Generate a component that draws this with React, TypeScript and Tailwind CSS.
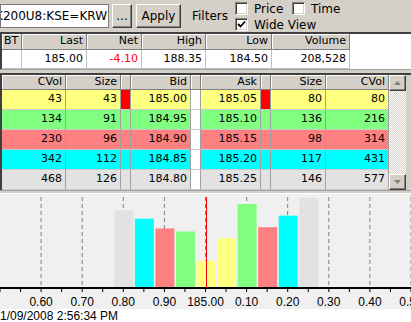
const UI = "font-['DejaVu_Sans','Liberation_Sans',sans-serif]";

const summary = [
  { label: "BT", w: "w-[20px]", value: "" },
  { label: "Last", w: "w-[65px]", value: "185.00" },
  { label: "Net", w: "w-[55px]", value: "-4.10", red: true },
  { label: "High", w: "w-[64px]", value: "188.35" },
  { label: "Low", w: "w-[66px]", value: "184.50" },
  { label: "Volume", w: "w-[78px]", value: "208,528" },
];

const book = [
  { bg: "bg-[#ffff80]", fill: "#ffff80", bidCVol: 43, bidSize: 43, bid: "185.00", ask: "185.05", askSize: 80, askCVol: 80, best: true },
  { bg: "bg-[#80ff80]", fill: "#80ff80", bidCVol: 134, bidSize: 91, bid: "184.95", ask: "185.10", askSize: 136, askCVol: 216 },
  { bg: "bg-[#ff8080]", fill: "#ff8080", bidCVol: 230, bidSize: 96, bid: "184.90", ask: "185.15", askSize: 98, askCVol: 314 },
  { bg: "bg-[#00ffff]", fill: "#00ffff", bidCVol: 342, bidSize: 112, bid: "184.85", ask: "185.20", askSize: 117, askCVol: 431 },
  { bg: "bg-[#e2e2e2]", fill: "#e2e2e2", bidCVol: 468, bidSize: 126, bid: "184.80", ask: "185.25", askSize: 146, askCVol: 577 },
];

const head = "h-full border-r border-b border-r-[#808080] border-b-[#808080] bg-[#d4d0c8] shadow-[inset_1px_1px_0_#fff] flex items-center justify-end pr-[3px]";

function Checkbox({ checked }: { checked?: boolean }) {
  return (
    <span className="w-[13px] h-[13px] bg-white border border-t-[#808080] border-l-[#808080] border-b-white border-r-white shadow-[inset_1px_1px_0_#404040,inset_-1px_-1px_0_#d4d0c8] flex items-center justify-center">
      {checked && (
        <svg width="9" height="9" viewBox="0 0 9 9">
          <path d="M1 4 L3.5 6.5 L8 1.5" stroke="#000" strokeWidth="1.8" fill="none" />
        </svg>
      )}
    </span>
  );
}

function Button({ children, w }: { children: React.ReactNode; w: string }) {
  return (
    <div className={`${w} h-[24px] bg-[#d4d0c8] border border-t-white border-l-white border-b-[#404040] border-r-[#404040] shadow-[inset_-1px_-1px_0_#808080] flex items-center justify-center text-[12px] text-black`}>
      {children}
    </div>
  );
}

function Arrow({ up }: { up?: boolean }) {
  return (
    <div className="h-[16px] bg-[#d4d0c8] border border-t-white border-l-white border-b-[#404040] border-r-[#404040] shadow-[inset_-1px_-1px_0_#808080] flex items-center justify-center">
      <svg width="7" height="4" viewBox="0 0 7 4">
        <path d={up ? "M0 4 L3.5 0 L7 4 Z" : "M0 0 L3.5 4 L7 0 Z"} fill="#808080" />
      </svg>
    </div>
  );
}

function Depth() {
  const base = 93;
  const k = 0.61;
  const step = 20.55;
  const ticks = Array.from({ length: 21 }, (_, i) => 205 + (i - 10) * step);
  const labels = ["0.60", "0.70", "0.80", "0.90", "185.00", "0.10", "0.20", "0.30", "0.40", "0.50"];
  return (
    <svg width="411" height="115" className="block">
      <rect width="411" height="115" fill="#f0f0f0" />
      {labels.map((_, i) => {
        const x = 205.5 + (i - 4) * 41.1;
        return <line key={i} x1={x} x2={x} y1={3} y2={base} stroke="#808080" strokeDasharray="4 3" />;
      })}
      {book.map((r, i) => (
        <g key={i}>
          <rect x={206 - i * step - 9.5} y={base - r.bidSize * k} width={19} height={r.bidSize * k} fill={r.fill} />
          <rect x={206 + (i + 1) * step - 9.5} y={base - r.askSize * k} width={19} height={r.askSize * k} fill={r.fill} />
        </g>
      ))}
      <rect x="0" y={base} width="411" height="2" fill="#000" />
      {ticks.map((x, i) => (
        <line key={i} x1={x + 0.5} x2={x + 0.5} y1={base + 2} y2={base + 5} stroke="#000" />
      ))}
      <line x1="206.5" x2="206.5" y1="3" y2={base + 1} stroke="#ff0000" />
      {labels.map((l, i) => (
        <text
          key={l}
          x={205.5 + (i - 4) * 41.1}
          y="112"
          textAnchor="middle"
          fontSize="12"
          fill="#000"
          fontFamily="'Liberation Sans Narrow','Liberation Sans',sans-serif"
        >
          {l}
        </text>
      ))}
    </svg>
  );
}

export default function App() {
  const widths = ["w-[64px]", "w-[55px]", "w-[10px]", "w-[60px]", "w-[10px]", "w-[60px]", "w-[10px]", "w-[55px]", "w-[63px]"];
  const labels = ["CVol", "Size", "", "Bid", "", "Ask", "", "Size", "CVol"];
  return (
    <div className={`w-[411px] h-[322px] overflow-hidden bg-white ${UI} text-[11px] text-black`}>
      {/* toolbar */}
      <div className="h-[32px] bg-[#d4d0c8] flex">
        <div className="mt-[4px] w-[109px] h-[24px] bg-white border border-[#7a7a7a] flex items-center justify-end overflow-hidden pr-[1px] text-[12px] whitespace-nowrap">
          <span>K200U8:KSE=KRW</span>
        </div>
        <div className="mt-[4px] ml-[3px]">
          <Button w="w-[20px]">...</Button>
        </div>
        <div className="mt-[4px] ml-[4px]">
          <Button w="w-[45px]">Apply</Button>
        </div>
        <div className="ml-[11px] w-[43px] flex items-center text-[12px]">Filters</div>
        <div className="flex flex-col pt-[2px] gap-[3px] text-[12px]">
          <div className="flex items-center h-[13px]">
            <div className="w-[57px] flex items-center gap-[6px]">
              <Checkbox />
              <span>Price</span>
            </div>
            <div className="flex items-center gap-[6px]">
              <Checkbox />
              <span>Time</span>
            </div>
          </div>
          <div className="flex items-center h-[13px] gap-[6px]">
            <Checkbox checked />
            <span>Wide View</span>
          </div>
        </div>
      </div>

      {/* summary grid */}
      <div className="border-t-2 border-l-2 border-t-[#404040] border-l-[#404040] bg-white">
        <div className="flex h-[16px]">
          {summary.map((c) => (
            <div key={c.label} className={`${c.w} ${head} ${c.label === "BT" ? "justify-start pl-[2px]" : ""}`}>
              {c.label}
            </div>
          ))}
        </div>
        <div className="flex h-[19px]">
          {summary.map((c) => (
            <div
              key={c.label}
              className={`${c.w} h-full border-r border-b border-[#c0c0c0] flex items-center justify-end pr-[3px] ${c.red ? "text-[#ff0000]" : ""}`}
            >
              {c.value}
            </div>
          ))}
        </div>
      </div>

      <div className="h-[4px] bg-[#d4d0c8] border-t border-[#a0a0a0]" />

      {/* book */}
      <div className="flex bg-[#d4d0c8] border-t-2 border-l-2 border-t-[#404040] border-l-[#404040]">
        <div className="flex flex-col">
          <div className="flex h-[15px]">
            {labels.map((l, i) => (
              <div key={i} className={`${widths[i]} ${head}`}>
                {l}
              </div>
            ))}
          </div>
          {book.map((r, i) => {
            const vals = [r.bidCVol, r.bidSize, null, r.bid, null, r.ask, null, r.askSize, r.askCVol];
            return (
              <div key={i} className={`flex h-[20px] ${r.bg}`}>
                {vals.map((v, j) => {
                  let extra = "";
                  if (j === 4) extra = "bg-white";
                  if ((j === 2 || j === 6) && r.best) extra = "bg-[#ff0000]";
                  return (
                    <div
                      key={j}
                      className={`${widths[j]} h-full border-r border-r-[#a0a0a0] border-b border-b-[#c8c8c8] flex items-center justify-end pr-[3px] ${extra}`}
                    >
                      {v}
                    </div>
                  );
                })}
              </div>
            );
          })}
        </div>
        <div className="w-[17px] flex flex-col">
          <Arrow up />
          <div className="flex-1 bg-[repeating-conic-gradient(#d4d0c8_0_25%,#ffffff_0_50%)] bg-[length:2px_2px]" />
          <Arrow />
        </div>
      </div>

      <div className="h-[4px] bg-[#d4d0c8] border-t border-b border-t-[#a0a0a0] border-b-white" />

      <Depth />

      <div className="h-[14px] flex items-center font-['Liberation_Sans_Narrow','Liberation_Sans',sans-serif] text-[12px] leading-none">
        1/09/2008 2:56:34 PM
      </div>
    </div>
  );
}
